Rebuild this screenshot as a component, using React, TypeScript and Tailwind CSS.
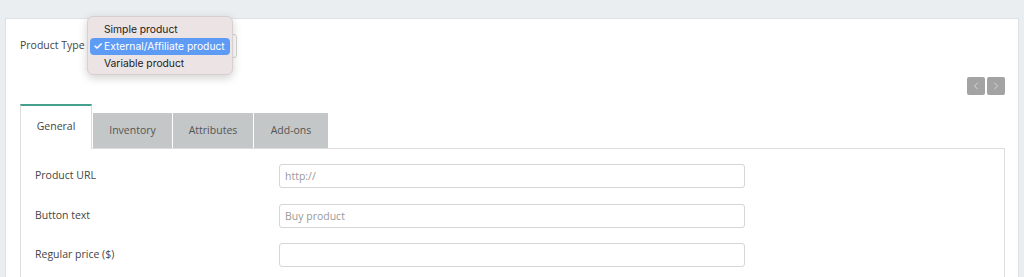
import React from 'react';
import { ChevronLeft, ChevronRight } from 'lucide-react';

const tabs = ['General', 'Inventory', 'Attributes', 'Add-ons'];
const tabWidths = [72, 80, 81, 75];

const fields = [
  { label: 'Product URL', placeholder: 'http://' },
  { label: 'Button text', placeholder: 'Buy product' },
  { label: 'Regular price ($)', placeholder: '' },
];

const options = ['Simple product', 'External/Affiliate product', 'Variable product'];

export default function App() {
  return (
    <div className="w-[1024px] h-[277px] overflow-hidden bg-[#eaeef0] pt-[18px] px-[5px] relative font-['Open_Sans',sans-serif] text-[#444]">
      <div className="h-[300px] bg-white border border-[#dde2e4] pl-[14px] pr-[13px]">
        {/* Product type row */}
        <div className="mt-[15px] flex items-center h-[24px]">
          <span className="text-[10.5px] w-[72px] whitespace-nowrap">Product Type</span>
          <div className="w-[145px] h-[24px] border border-[#d4d4d4] rounded-[3px] bg-white" />
        </div>

        {/* pager */}
        <div className="mt-[19px] flex justify-end gap-[2px]">
          <button className="w-[18px] h-[18px] rounded-[2px] bg-[#a3a3a3] flex items-center justify-center text-[#e4e4e4]">
            <ChevronLeft size={12} strokeWidth={1.5} />
          </button>
          <button className="w-[18px] h-[18px] rounded-[2px] bg-[#a3a3a3] flex items-center justify-center text-[#e4e4e4]">
            <ChevronRight size={12} strokeWidth={1.5} />
          </button>
        </div>

        {/* tabs */}
        <div className="mt-[9px] flex items-end">
          {tabs.map((t, i) =>
            i === 0 ? (
              <div
                key={t}
                className="h-[45px] shrink-0 border-t-2 border-t-[#45a08e] border-x border-x-[#dddddd] bg-white flex items-center justify-center text-[10.5px] text-[#444] pb-[2px] relative z-10 -mb-px whitespace-nowrap"
                style={{ width: tabWidths[i] }}
              >
                {t}
              </div>
            ) : (
              <div
                key={t}
                className="h-[35px] shrink-0 bg-[#c4c7c7] border-l border-white flex items-center justify-center text-[10.5px] text-[#555] whitespace-nowrap"
                style={{ width: tabWidths[i] }}
              >
                {t}
              </div>
            )
          )}
        </div>

        {/* content */}
        <div className="border border-[#dddddd] pt-[15px] pl-[14px] h-[200px]">
          {fields.map((f, i) => (
            <div key={f.label} className={`flex items-center ${i === 0 ? '' : i === 1 ? 'mt-[16px]' : 'mt-[15px]'}`}>
              <label className="w-[244px] text-[10.5px] text-[#444]">{f.label}</label>
              <input
                readOnly
                placeholder={f.placeholder}
                className="w-[466px] h-[24px] border border-[#d6d6d6] rounded-[3px] px-[5px] text-[10.5px] placeholder:text-[#999] outline-none"
              />
            </div>
          ))}
        </div>
      </div>

      {/* open select menu */}
      <div className="absolute left-[87px] top-[16px] w-[146px] h-[59px] rounded-[6px] bg-[#ece4e4] border border-[#d8d0d0] shadow-[0_3px_10px_rgba(0,0,0,0.18)] pt-[4px] px-[2px] font-['Inter',sans-serif] text-[10.3px] text-[#222]">
        {options.map((o, i) => (
          <div
            key={o}
            className={`h-[17px] flex items-center rounded-[4px] relative pl-[14px] whitespace-nowrap ${i === 1 ? 'bg-[#5e9bf5] text-white' : ''}`}
          >
            {i === 1 && <span className="absolute left-[3px] text-[11px] font-semibold">✓</span>}
            {o}
          </div>
        ))}
      </div>
    </div>
  );
}
